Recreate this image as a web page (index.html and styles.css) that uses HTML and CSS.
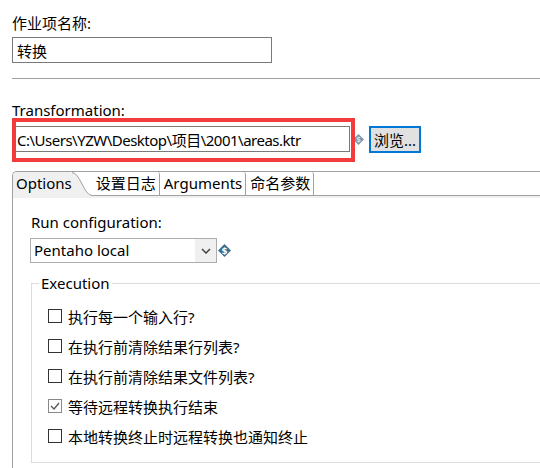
FILE: index.html
```html
<!DOCTYPE html>
<html lang="zh-CN">
<head>
  <meta charset="UTF-8" />
  <title>作业项 - 转换</title>
  <link rel="stylesheet" href="styles.css">
</head>
<body>

  <div class="field-label">作业项名称:</div>
  <input class="text-input name-input" type="text" value="转换">

  <div class="separator"></div>

  <div class="field-label trans-label">Transformation:</div>
  <div class="path-row">
    <input class="text-input path-input" type="text" value="C:\Users\YZW\Desktop\项目\2001\areas.ktr">
    <svg class="var-icon" width="11" height="11" viewBox="0 0 12 12">
      <path d="M6 0 L12 6 L6 12 L0 6 Z" fill="#7d98ae"/>
      <text x="6" y="9" text-anchor="middle" font-size="8" font-family="DejaVu Sans" fill="#fff">$</text>
    </svg>
    <button class="browse-btn">浏览...</button>
    <div class="highlight"></div>
  </div>

  <div class="tab-folder">
    <div class="tab-strip">
      <div class="tab active">Options</div>
      <svg class="tab-curve" width="20" height="24" viewBox="0 0 20 24">
        <path d="M0 0 C8 0 12 23 20 23 L20 24 L0 24 Z" fill="#f0f0f0"/>
        <path d="M0 0.5 C8 0.5 12 23.5 20 23.5" fill="none" stroke="#a0a0a0"/>
      </svg>
      <div class="tab">设置日志</div>
      <div class="tab">Arguments</div>
      <div class="tab">命名参数</div>
    </div>
    <div class="tab-band"></div>

    <div class="tab-body">
      <div class="field-label">Run configuration:</div>
      <div class="config-row">
        <div class="select">
          <span class="select-value">Pentaho local</span>
          <span class="select-arrow">
            <svg width="10" height="6" viewBox="0 0 10 6"><path d="M1 1 L5 5 L9 1" fill="none" stroke="#444" stroke-width="1.5"/></svg>
          </span>
        </div>
        <svg class="var-icon" width="13" height="13" viewBox="0 0 12 12">
          <path d="M6 0 L12 6 L6 12 L0 6 Z" fill="#3f6e92"/>
          <text x="6" y="9" text-anchor="middle" font-size="8" font-family="DejaVu Sans" font-weight="bold" fill="#fff">$</text>
        </svg>
      </div>

      <fieldset class="group">
        <legend>Execution</legend>
        <label class="check"><span class="box"></span>执行每一个输入行?</label>
        <label class="check"><span class="box"></span>在执行前清除结果行列表?</label>
        <label class="check"><span class="box"></span>在执行前清除结果文件列表?</label>
        <label class="check"><span class="box checked">
          <svg width="12" height="12" viewBox="0 0 12 12"><path d="M2 6 L5 9 L10 3" fill="none" stroke="#555" stroke-width="1.3"/></svg>
        </span>等待远程转换执行结束</label>
        <label class="check"><span class="box"></span>本地转换终止时远程转换也通知终止</label>
      </fieldset>
    </div>
  </div>

</body>
</html>
```

FILE: styles.css
```css
body {
  margin: 0;
  padding: 0 0 0 12px;
  background: #fff;
  color: #000;
  font-family: "Noto Sans", "Noto Sans CJK SC", sans-serif;
  font-size: 15px;
  overflow: hidden;
}

.field-label {
  line-height: 20px;
  height: 20px;
  padding-top: 13px;
}

.text-input {
  display: block;
  box-sizing: border-box;
  height: 26px;
  margin: 4px 0 0;
  padding: 0 4px;
  border: 1px solid #7a7a7a;
  font: inherit;
  color: #000;
  background: #fff;
}

.name-input {
  width: 260px;
}

.separator {
  height: 1px;
  margin-top: 15px;
  background: #a0a0a0;
}

.trans-label {
  padding-top: 21px;
}

.path-row {
  position: relative;
  display: flex;
  align-items: center;
  margin-top: 5px;
}

.path-input {
  width: 338px;
  margin: 0;
  letter-spacing: -0.5px;
}

.path-row .var-icon {
  margin-left: 3px;
}

.browse-btn {
  box-sizing: border-box;
  width: 52px;
  height: 27px;
  margin: 1px 0 0 5px;
  padding: 0;
  border: 2px solid #0078d7;
  background: #e1e1e1;
  font: inherit;
  color: #000;
}

.highlight {
  position: absolute;
  left: 0;
  top: -7px;
  width: 343px;
  height: 44px;
  box-sizing: border-box;
  border: 4px solid #f33b3b;
}

.tab-folder {
  margin-top: 18px;
  height: 300px;
  border-left: 1px solid #a0a0a0;
  border-top: 1px solid #a0a0a0;
  border-top-left-radius: 5px;
}

.tab-strip {
  display: flex;
  height: 23px;
  border-bottom: 1px solid #a0a0a0;
}

.tab {
  line-height: 23px;
  padding: 0 3px 0 4px;
  border-right: 1px solid #a0a0a0;
  border-top-right-radius: 3px;
}

.tab.active {
  position: relative;
  height: 24px;
  padding: 0 0 0 3px;
  border-right: none;
  background: #f0f0f0;
  border-top-left-radius: 4px;
}

.tab-curve {
  flex: none;
}

.tab-band {
  height: 2px;
  background: #f0f0f0;
}

.tab-body {
  padding-left: 18px;
}

.tab-body > .field-label {
  padding-top: 14px;
}

.config-row {
  display: flex;
  align-items: center;
  margin-top: 6px;
}

.select {
  box-sizing: border-box;
  display: flex;
  width: 187px;
  height: 25px;
  border: 1px solid #adadad;
  margin-left: -1px;
}

.select-value {
  flex: 1;
  line-height: 23px;
  padding-left: 3px;
}

.select-arrow {
  display: flex;
  align-items: center;
  justify-content: center;
  width: 21px;
  background: #f0f0f0;
}

.config-row .var-icon {
  margin-left: 1px;
}

.group {
  margin: 10px 0 0;
  padding: 8px 0 11px 16px;
  border: 1px solid #dcdcdc;
  border-right: none;
}

.group legend {
  line-height: 20px;
  padding: 0 2px;
  margin-left: -9px;
}

.check {
  display: flex;
  align-items: center;
  height: 30px;
}

.box {
  box-sizing: border-box;
  display: flex;
  align-items: center;
  justify-content: center;
  width: 14px;
  height: 14px;
  margin-right: 6px;
  border: 1px solid #333;
  background: #fff;
}

.box.checked {
  border-color: #888;
}
```
